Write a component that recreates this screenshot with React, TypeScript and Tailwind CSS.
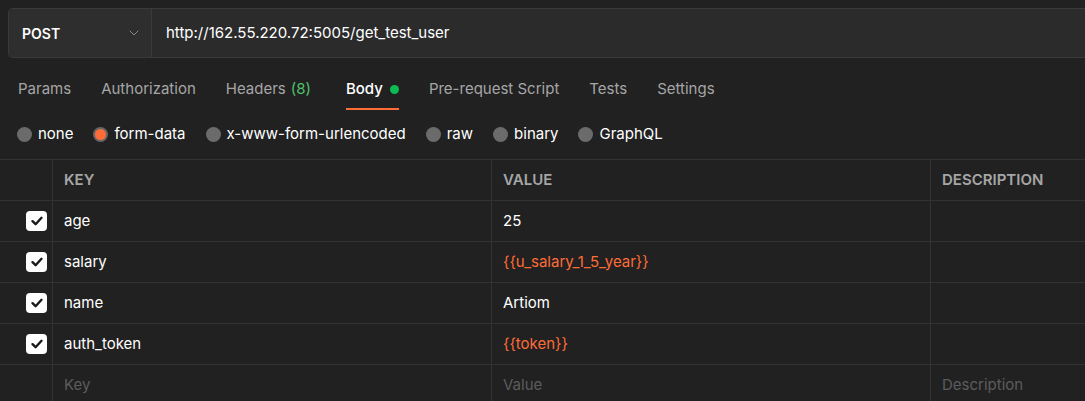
import { ChevronDown } from "lucide-react";

const tabs = [
  { label: "Params" },
  { label: "Authorization" },
  { label: "Headers", count: "(8)" },
  { label: "Body", active: true },
  { label: "Pre-request Script" },
  { label: "Tests" },
  { label: "Settings" },
];

const bodyTypes = ["none", "form-data", "x-www-form-urlencoded", "raw", "binary", "GraphQL"];

const rows = [
  { key: "age", value: "25" },
  { key: "salary", value: "{{u_salary_1_5_year}}", variable: true },
  { key: "name", value: "Artiom" },
  { key: "auth_token", value: "{{token}}", variable: true },
];

const Check = () => (
  <div className="w-[21px] h-[20px] rounded-[4px] bg-white flex items-center justify-center">
    <svg width="14" height="14" viewBox="0 0 14 14" fill="none">
      <path d="M2.5 7.2 L5.6 10.2 L11.5 3.8" stroke="#1a1a1a" strokeWidth="2.4" strokeLinecap="round" strokeLinejoin="round" />
    </svg>
  </div>
);

export default function App() {
  return (
    <div className="w-[1085px] h-[401px] overflow-hidden bg-[#212121] text-[15px] text-[#e6e6e6] font-['Inter',sans-serif]">
      <div className="pt-2 pl-2">
        <div className="flex h-[50px] rounded-l-[5px] border border-r-0 border-[#3a3a3a] bg-[#2b2b2b]">
          <div className="w-[143px] flex items-center justify-between pl-[13px] pr-[9px] bg-[#2e2e2e] border-r border-[#3a3a3a] rounded-l-[5px]">
            <span className="font-semibold text-[14px] text-white">POST</span>
            <ChevronDown size={16} strokeWidth={1.5} className="text-[#8a8a8a]" />
          </div>
          <div className="flex items-center pl-[14px] text-white">http://162.55.220.72:5005/get_test_user</div>
        </div>
      </div>

      <div className="flex gap-[30px] pl-[18px] h-[49px] items-stretch">
        {tabs.map((t) => (
          <div key={t.label} className={`relative flex items-center pt-[16px] pb-[2px] ${t.active ? "ml-[5px]" : ""}`}>
            <span className={t.active ? "text-white font-medium" : "text-[#a6a6a6]"}>{t.label}</span>
            {t.count && <span className="ml-[5px] text-[#4fc26b]">{t.count}</span>}
            {t.active && <span className="ml-[7px] w-[9px] h-[9px] rounded-full bg-[#0cbb52]" />}
            {t.active && <span className="absolute left-0 right-0 bottom-[-3px] h-[2px] bg-[#ff6c37]" />}
          </div>
        ))}
      </div>

      <div className="flex items-center gap-[20px] pl-[17px] h-[52px] pt-[3px]">
        {bodyTypes.map((b) => (
          <div key={b} className="flex items-center gap-[6px]">
            {b === "form-data" ? (
              <span className="w-[15px] h-[15px] rounded-full bg-[#666] flex items-center justify-center">
                <span className="w-[11px] h-[11px] rounded-full bg-[#ff6c37]" />
              </span>
            ) : (
              <span className="w-[15px] h-[15px] rounded-full bg-[#6b6b6b]" />
            )}
            <span className="text-white">{b}</span>
          </div>
        ))}
      </div>

      <div className="border-t border-[#333]">
        <div className="grid grid-cols-[52px_439px_439px_1fr] h-[41px] border-b border-[#333] text-[#a6a6a6] font-semibold">
          <div />
          <div className="border-l border-[#333] flex items-center pl-[11px]">KEY</div>
          <div className="border-l border-[#333] flex items-center pl-[11px]">VALUE</div>
          <div className="border-l border-[#333] flex items-center pl-[11px]">DESCRIPTION</div>
        </div>
        {rows.map((r) => (
          <div key={r.key} className="grid grid-cols-[52px_439px_439px_1fr] h-[41px] border-b border-[#333]">
            <div className="flex items-center justify-end pr-[5px]">
              <Check />
            </div>
            <div className="border-l border-[#333] flex items-center pl-[11px] text-white">{r.key}</div>
            <div className={`border-l border-[#333] flex items-center pl-[11px] ${r.variable ? "text-[#ff6c37]" : "text-white"}`}>{r.value}</div>
            <div className="border-l border-[#333]" />
          </div>
        ))}
        <div className="grid grid-cols-[52px_439px_439px_1fr] h-[41px] text-[#5c5c5c]">
          <div />
          <div className="border-l border-[#333] flex items-center pl-[11px]">Key</div>
          <div className="border-l border-[#333] flex items-center pl-[11px]">Value</div>
          <div className="border-l border-[#333] flex items-center pl-[11px]">Description</div>
        </div>
      </div>
    </div>
  );
}
